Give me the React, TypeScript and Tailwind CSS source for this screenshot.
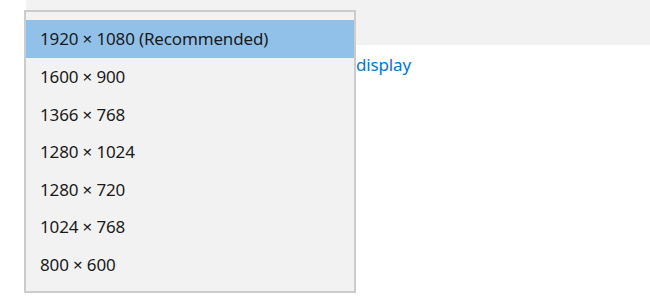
const resolutions = [
  "1920 × 1080 (Recommended)",
  "1600 × 900",
  "1366 × 768",
  "1280 × 1024",
  "1280 × 720",
  "1024 × 768",
  "800 × 600",
];

export default function App() {
  const selected = 0;

  return (
    <div
      className="relative w-[650px] h-[300px] overflow-hidden bg-white text-[#1a1a1a]"
      style={{ fontFamily: '"Noto Sans", "Open Sans", sans-serif' }}
    >
      {/* page behind the open list */}
      <div className="ml-[26px] h-[45px] bg-[#f2f2f2]" />
      <div className="flex items-center h-[40px] pl-[26px] text-[17px] text-[#0078d7] tracking-[-0.15px]">
        <span className="w-[330px] overflow-hidden whitespace-nowrap text-right">
          Connect to a wireless&nbsp;
        </span>
        <span>display</span>
      </div>

      {/* resolution dropdown */}
      <div className="absolute left-[24px] top-[10px] w-[332px] h-[283px] border-2 border-[#cccccc] bg-[#f2f2f2] pt-[8px] tracking-[-0.15px]">
        {resolutions.map((r, i) => (
          <div
            key={r}
            className={
              i === selected
                ? "flex items-center h-[38px] pl-[14px] text-[17px] bg-[#91c1e8]"
                : "flex items-center h-[37.6px] pl-[14px] text-[17px]"
            }
          >
            {r}
          </div>
        ))}
      </div>
    </div>
  );
}
